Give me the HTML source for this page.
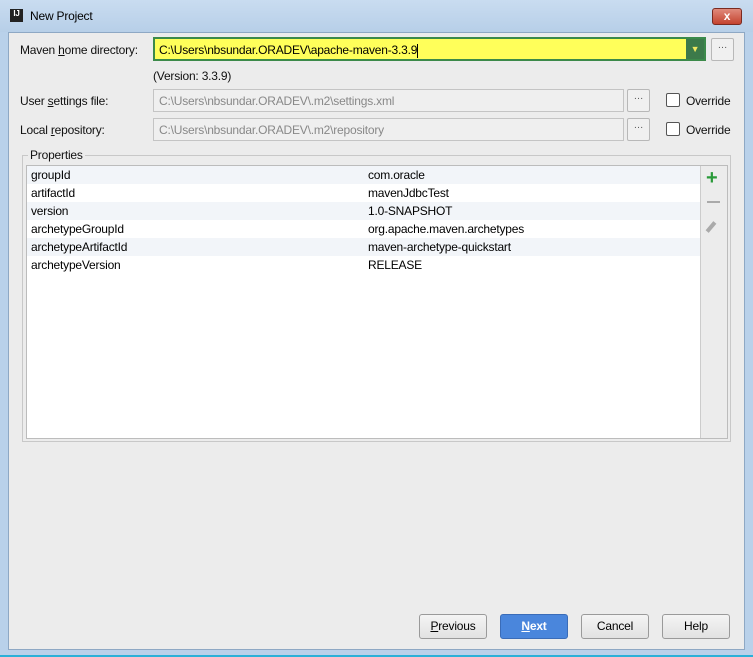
<!DOCTYPE html>
<html><head><style>
*{box-sizing:border-box;margin:0;padding:0}
body{width:753px;height:657px;background:#b9d1ea;font-family:"Liberation Sans",sans-serif;font-size:12px;color:#000;position:relative;overflow:hidden;letter-spacing:-0.2px}
.abs{position:absolute}
#title{left:0;top:0;width:753px;height:32px;background:linear-gradient(#c9dcf0,#b7cfe8)}
#content{left:8px;top:32px;width:737px;height:618px;background:#ececec;border:1px solid #8ea8c4}
.lbl{font-size:12px;color:#111}
.field{background:#efefef;border:1px solid #c4c4c4;color:#888;padding:4px 5px;height:23px;font-size:12px}
.btn3{background:#f0f0f0;border:1px solid #b8b8b8;border-radius:2px;width:23px;height:23px;text-align:center;font-size:10px;color:#555;line-height:18px}
.cb{width:14px;height:14px;border:1px solid #555;background:#fff;border-radius:2px}
.row{position:absolute;left:0;width:673px;height:18px;line-height:18px}
.row span{position:absolute}
.b{position:absolute;top:614px;height:25px;border:1px solid #9a9a9a;border-radius:3px;background:linear-gradient(#f4f4f4,#e2e2e2);text-align:center;line-height:23px;font-size:12px}
</style></head><body>
<div class="abs" id="title">
 <div class="abs" style="left:10px;top:9px;width:13px;height:13px;background:#222;color:#fff;font-size:8px;line-height:10px;text-align:center;font-weight:bold">IJ</div>
 <div class="abs" style="left:30px;top:9px;font-size:12px">New Project</div>
 <div class="abs" style="left:712px;top:8px;width:30px;height:17px;background:linear-gradient(#e08a7c,#c4432f);border:1px solid #7a2a20;border-radius:3px;color:#fff;font-weight:bold;text-align:center;line-height:14px;font-size:12px">x</div>
</div>
<div class="abs" id="content"></div>
<div class="abs lbl" style="left:20px;top:43px">Maven <u>h</u>ome directory:</div>
<div class="abs" style="left:153px;top:37px;width:553px;height:24px;background:#ffff5a;border:2px solid #3c8a4a;padding:2px 4px;line-height:18px">C:\Users\nbsundar.ORADEV\apache-maven-3.3.9<span style="display:inline-block;width:1px;height:14px;background:#000;vertical-align:middle"></span></div>
<div class="abs" style="left:686px;top:39px;width:18px;height:20px;background:#3c7a4a;color:#f0e860;font-size:9px;text-align:center;line-height:20px">▼</div>
<div class="abs btn3" style="left:711px;top:38px">···</div>
<div class="abs lbl" style="left:153px;top:69px">(Version: 3.3.9)</div>
<div class="abs lbl" style="left:20px;top:94px">User <u>s</u>ettings file:</div>
<div class="abs field" style="left:153px;top:89px;width:471px">C:\Users\nbsundar.ORADEV\.m2\settings.xml</div>
<div class="abs btn3" style="left:627px;top:89px">···</div>
<div class="abs cb" style="left:666px;top:93px"></div>
<div class="abs lbl" style="left:686px;top:94px">Override</div>
<div class="abs lbl" style="left:20px;top:123px">Local <u>r</u>epository:</div>
<div class="abs field" style="left:153px;top:118px;width:471px">C:\Users\nbsundar.ORADEV\.m2\repository</div>
<div class="abs btn3" style="left:627px;top:118px">···</div>
<div class="abs cb" style="left:666px;top:122px"></div>
<div class="abs lbl" style="left:686px;top:123px">Override</div>
<div class="abs" style="left:22px;top:155px;width:709px;height:287px;border:1px solid #c8c8c8"></div>
<div class="abs lbl" style="left:28px;top:148px;background:#ececec;padding:0 2px">Properties</div>
<div class="abs" style="left:26px;top:165px;width:702px;height:274px;border:1px solid #bcbcbc;background:#fff"></div>
<div class="abs" style="left:700px;top:166px;width:27px;height:272px;background:#ececec;border-left:1px solid #ccc"></div>
<div class="abs" style="left:706px;top:167px;color:#2a9a3a;font-size:20px;font-weight:bold">+</div>
<div class="abs" style="left:707px;top:201px;width:13px;height:2px;background:#aaa"></div>
<div class="abs" style="left:709px;top:221px;width:4px;height:12px;background:#aaa;transform:rotate(40deg)"></div>
<div class="abs" style="left:27px;top:166px;width:673px;height:120px">
 <div class="row" style="top:0;background:#f2f5f9"><span style="left:4px">groupId</span><span style="left:341px">com.oracle</span></div>
 <div class="row" style="top:18px"><span style="left:4px">artifactId</span><span style="left:341px">mavenJdbcTest</span></div>
 <div class="row" style="top:36px;background:#f2f5f9"><span style="left:4px">version</span><span style="left:341px">1.0-SNAPSHOT</span></div>
 <div class="row" style="top:54px"><span style="left:4px">archetypeGroupId</span><span style="left:341px">org.apache.maven.archetypes</span></div>
 <div class="row" style="top:72px;background:#f2f5f9"><span style="left:4px">archetypeArtifactId</span><span style="left:341px">maven-archetype-quickstart</span></div>
 <div class="row" style="top:90px"><span style="left:4px">archetypeVersion</span><span style="left:341px">RELEASE</span></div>
</div>
<div class="b" style="left:419px;width:68px"><u>P</u>revious</div>
<div class="b" style="left:500px;width:68px;background:#4a86dc;border-color:#3a6cb8;color:#fff;font-weight:bold"><u>N</u>ext</div>
<div class="b" style="left:581px;width:68px">Cancel</div>
<div class="b" style="left:662px;width:68px">Help</div>
<div class="abs" style="left:0;top:650px;width:753px;height:7px;background:#b9d1ea;border-bottom:2px solid #2ab0d8"></div>
</body></html>
